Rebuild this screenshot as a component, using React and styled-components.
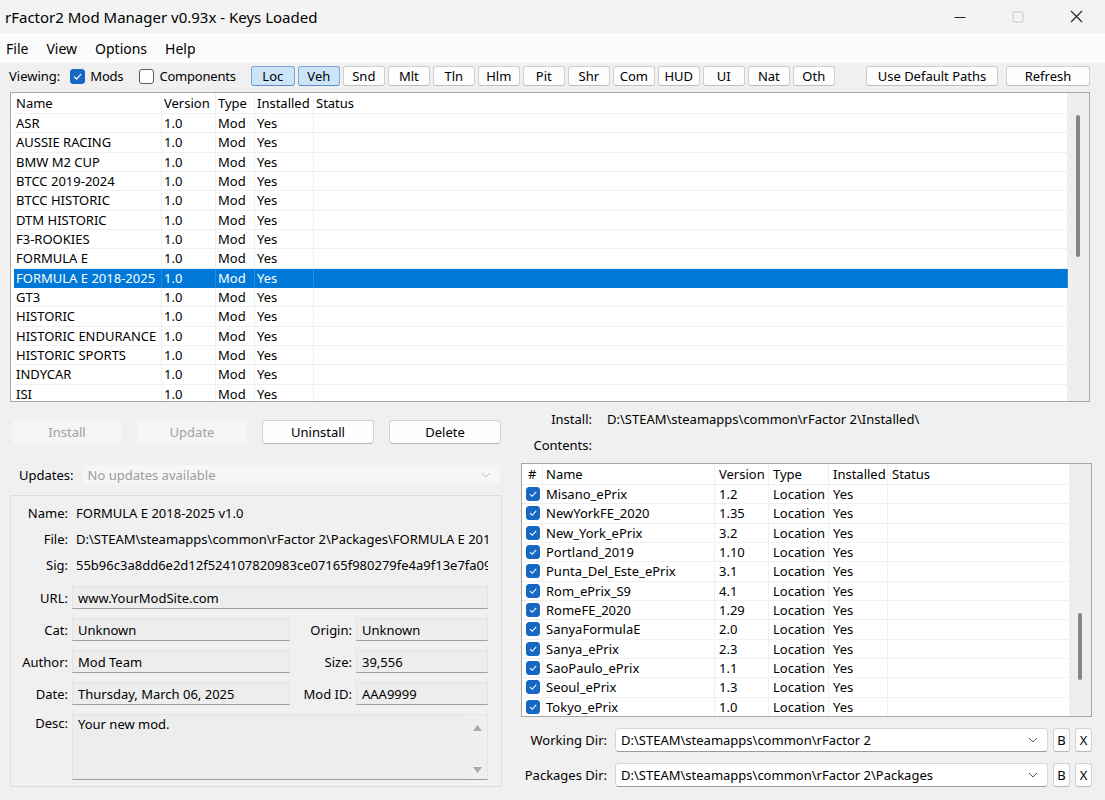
import React from "react";
import styled, { createGlobalStyle } from "styled-components";

const GlobalStyle = createGlobalStyle`
  html, body {
    margin: 0;
    padding: 0;
    background: #f0f0f0;
  }
  body {
    font-family: "Noto Sans", "Open Sans", sans-serif;
    font-size: 13px;
    color: #000;
  }
  * {
    box-sizing: border-box;
  }
`;

// data

const mods = [
  "ASR",
  "AUSSIE RACING",
  "BMW M2 CUP",
  "BTCC 2019-2024",
  "BTCC HISTORIC",
  "DTM HISTORIC",
  "F3-ROOKIES",
  "FORMULA E",
  "FORMULA E 2018-2025",
  "GT3",
  "HISTORIC",
  "HISTORIC ENDURANCE",
  "HISTORIC SPORTS",
  "INDYCAR",
  "ISI",
];

const contents = [
  ["Misano_ePrix", "1.2"],
  ["NewYorkFE_2020", "1.35"],
  ["New_York_ePrix", "3.2"],
  ["Portland_2019", "1.10"],
  ["Punta_Del_Este_ePrix", "3.1"],
  ["Rom_ePrix_S9", "4.1"],
  ["RomeFE_2020", "1.29"],
  ["SanyaFormulaE", "2.0"],
  ["Sanya_ePrix", "2.3"],
  ["SaoPaulo_ePrix", "1.1"],
  ["Seoul_ePrix", "1.3"],
  ["Tokyo_ePrix", "1.0"],
];

const filters = ["Loc", "Veh", "Snd", "Mlt", "Tln", "Hlm", "Pit", "Shr", "Com", "HUD", "UI", "Nat", "Oth"];

//Styled-Components

const Window = styled.div`
  width: 1105px;
  height: 800px;
  background: #f0f0f0;
  display: flex;
  flex-direction: column;
  overflow: hidden;
`;

const TitleBar = styled.div`
  height: 33px;
  flex-shrink: 0;
  background: #f3f3f3;
  display: flex;
  align-items: center;
  padding-left: 5px;
`;

const Title = styled.div`
  flex: 1;
  font-size: 15px;
`;

const WinButtons = styled.div`
  display: flex;
  height: 100%;
`;

const WinButton = styled.div`
  width: 58px;
  display: flex;
  align-items: center;
  justify-content: center;
`;

const MenuBar = styled.div`
  height: 30px;
  flex-shrink: 0;
  background: #fbfbfb;
  display: flex;
  align-items: center;
  gap: 18px;
  padding-left: 6px;
  font-size: 14px;
`;

const Toolbar = styled.div`
  height: 26px;
  flex-shrink: 0;
  display: flex;
  align-items: center;
  padding: 0 15px 0 9px;
`;

const CheckLabel = styled.label`
  display: flex;
  align-items: center;
  gap: 5px;
  letter-spacing: -0.2px;
  margin-left: ${(p) => p.$ml || 0}px;
`;

const Box = styled.span`
  width: ${(p) => p.$size}px;
  height: ${(p) => p.$size}px;
  border-radius: 3px;
  display: inline-flex;
  align-items: center;
  justify-content: center;
  flex-shrink: 0;
  background: ${(p) => (p.$on ? "#1668c4" : "#fff")};
  border: 1px solid ${(p) => (p.$on ? "#1668c4" : "#5c5c5c")};
`;

const FilterGroup = styled.div`
  display: flex;
  gap: 3px;
  margin-left: 15px;
`;

const ToolButton = styled.button`
  font: inherit;
  font-size: 13px;
  height: 20px;
  width: ${(p) => p.$w || 42}px;
  padding: 0;
  border-radius: 3px;
  color: #000;
  background: ${(p) => (p.$active ? "#cce4f7" : "#fdfdfd")};
  border: 1px solid ${(p) => (p.$active ? "#7fa9d3" : "#d0d0d0")};
  border-bottom-color: ${(p) => (p.$active ? "#5f8fc0" : "#bdbdbd")};
`;

const RightTools = styled.div`
  margin-left: auto;
  display: flex;
  gap: 8px;
`;

const TableFrame = styled.div`
  height: ${(p) => p.$h}px;
  margin: ${(p) => p.$m};
  flex-shrink: 0;
  border: 1px solid #a6a6a6;
  background: #fff;
  display: flex;
  overflow: hidden;
`;

const TableBody = styled.div`
  flex: 1;
  overflow: hidden;
  padding-left: ${(p) => p.$pl || 0}px;
`;

const Row = styled.div`
  display: grid;
  grid-template-columns: ${(p) => p.$cols};
  height: ${(p) => p.$h}px;
  background: ${(p) => (p.$sel ? "#0078d7" : "transparent")};
  color: ${(p) => (p.$sel ? "#fff" : "#000")};
`;

const Cell = styled.div`
  display: flex;
  align-items: center;
  gap: 6px;
  padding-left: ${(p) => p.$pl ?? 2}px;
  white-space: nowrap;
  overflow: hidden;
  border-right: 1px solid ${(p) => (p.$sel ? "#2a8ce0" : "#f0f0f0")};
  border-bottom: 1px solid ${(p) => (p.$sel ? "#0078d7" : "#f0f0f0")};
`;

const ScrollTrack = styled.div`
  width: 21px;
  flex-shrink: 0;
  background: #eeeeee;
  display: flex;
  flex-direction: column;
`;

const ScrollThumb = styled.div`
  width: 4px;
  margin-left: 8px;
  margin-top: ${(p) => p.$top}px;
  height: ${(p) => p.$h}px;
  border-radius: 2px;
  background: #858585;
`;

const Bottom = styled.div`
  flex: 1;
  display: grid;
  grid-template-columns: 512px 1fr;
`;

const LeftCol = styled.div`
  display: flex;
  flex-direction: column;
  padding-left: 10px;
`;

const RightCol = styled.div`
  display: flex;
  flex-direction: column;
  padding: 0 13px 0 9px;
`;

const ActionRow = styled.div`
  display: flex;
  gap: 15px;
  margin-top: 18px;
  padding-left: 2px;
`;

const ActionButton = styled.button`
  font: inherit;
  font-size: 13px;
  width: ${(p) => p.$w}px;
  height: 24px;
  border-radius: 4px;
  color: ${(p) => (p.disabled ? "#a2a2a2" : "#000")};
  background: ${(p) => (p.disabled ? "#f5f5f5" : "#fdfdfd")};
  border: 1px solid ${(p) => (p.disabled ? "#f5f5f5" : "#d3d3d3")};
  border-bottom-color: ${(p) => (p.disabled ? "#f5f5f5" : "#b8b8b8")};
`;

const UpdatesRow = styled.div`
  display: flex;
  align-items: center;
  margin-top: 20px;
  height: 21px;
  padding-left: 9px;
  gap: 8px;
`;

const Combo = styled.div`
  height: ${(p) => p.$h}px;
  width: ${(p) => (p.$w ? `${p.$w}px` : "auto")};
  flex: ${(p) => (p.$w ? "none" : 1)};
  margin-left: ${(p) => p.$ml || 0}px;
  display: flex;
  align-items: center;
  padding: 0 9px 0 5px;
  border-radius: 4px;
  color: ${(p) => (p.$disabled ? "#9c9c9c" : "#000")};
  background: ${(p) => (p.$disabled ? "#f6f6f6" : "#fff")};
  border: 1px solid ${(p) => (p.$disabled ? "#f0f0f0" : "#d6d6d6")};
  border-bottom-color: ${(p) => (p.$disabled ? "#f0f0f0" : "#9a9a9a")};
`;

const ComboText = styled.span`
  flex: 1;
  white-space: nowrap;
  overflow: hidden;
`;

const GroupBox = styled.div`
  margin-top: 10px;
  width: 492px;
  height: 292px;
  border: 1px solid #dcdcdc;
  padding: 4px 13px 0 0;
  display: flex;
  flex-direction: column;
`;

const InfoRow = styled.div`
  display: flex;
  align-items: center;
  height: 26px;
`;

const Label = styled.div`
  width: ${(p) => p.$w}px;
  flex-shrink: 0;
  text-align: right;
  white-space: nowrap;
  align-self: ${(p) => (p.$top ? "flex-start" : "center")};
`;

const InfoValue = styled.div`
  margin-left: ${(p) => p.$ml || 8}px;
  white-space: nowrap;
  overflow: hidden;
  flex: 1;
`;

const Fields = styled.div`
  display: flex;
  flex-direction: column;
  gap: 9px;
  margin-top: 8px;
`;

const FieldRow = styled.div`
  display: flex;
  align-items: center;
`;

const Field = styled.div`
  height: ${(p) => p.$h || 23}px;
  width: ${(p) => (p.$w ? `${p.$w}px` : "auto")};
  flex: ${(p) => (p.$w ? "none" : 1)};
  margin-left: 4px;
  padding-left: 5px;
  display: flex;
  align-items: ${(p) => (p.$multi ? "flex-start" : "center")};
  background: #ededed;
  border: 1px solid #e4e4e4;
  border-bottom-color: #9d9d9d;
  white-space: nowrap;
  overflow: hidden;
`;

const DescText = styled.div`
  flex: 1;
`;

const DescScroll = styled.div`
  width: 20px;
  height: 100%;
  display: flex;
  flex-direction: column;
  justify-content: space-between;
  align-items: center;
  padding: 10px 0 6px;
  background: #efefef;
`;

const InfoLine = styled.div`
  display: flex;
  align-items: center;
  height: 20px;
  margin-top: ${(p) => p.$mt}px;
`;

const DirRow = styled.div`
  display: flex;
  align-items: center;
  margin-top: 11px;
  height: 24px;
`;

const SmallButton = styled.button`
  font: inherit;
  font-size: 13px;
  width: 17px;
  height: 24px;
  padding: 0;
  margin-left: 5px;
  border-radius: 3px;
  background: #fdfdfd;
  border: 1px solid #d3d3d3;
  border-bottom-color: #b8b8b8;
  color: #000;
`;

// small drawings

const Check = ({ size }) => (
  <svg width={size - 4} height={size - 4} viewBox="0 0 10 10">
    <path d="M2 5.2 L4.2 7.3 L8.2 2.8" fill="none" stroke="#fff" strokeWidth="1.1" />
  </svg>
);

const CheckBox = ({ on, size = 15 }) => (
  <Box $on={on} $size={size}>
    {on && <Check size={size} />}
  </Box>
);

const Chevron = ({ color = "#555" }) => (
  <svg width="10" height="6" viewBox="0 0 10 6">
    <path d="M1 1 L5 5 L9 1" fill="none" stroke={color} strokeWidth="1" />
  </svg>
);

const Triangle = ({ up }) => (
  <svg width="9" height="6" viewBox="0 0 9 6">
    <path d={up ? "M0 6 L4.5 0 L9 6 Z" : "M0 0 L4.5 6 L9 0 Z"} fill="#a8a8a8" />
  </svg>
);

const modCols = "148px 54px 39px 59px 1fr";
const contentCols = "21px 172px 54px 60px 59px 1fr";

export default function App() {
  return (
    <Window>
      <GlobalStyle />
      <TitleBar>
        <Title>rFactor2 Mod Manager v0.93x - Keys Loaded</Title>
        <WinButtons>
          <WinButton>
            <svg width="12" height="12" viewBox="0 0 12 12">
              <path d="M0.5 6.5 H11.5" stroke="#222" strokeWidth="1" />
            </svg>
          </WinButton>
          <WinButton>
            <svg width="12" height="12" viewBox="0 0 12 12">
              <rect x="1" y="1" width="10" height="10" rx="1.5" fill="none" stroke="#c4c4c4" strokeWidth="1" />
            </svg>
          </WinButton>
          <WinButton>
            <svg width="13" height="13" viewBox="0 0 13 13">
              <path d="M1 1 L12 12 M12 1 L1 12" stroke="#222" strokeWidth="1.1" />
            </svg>
          </WinButton>
        </WinButtons>
      </TitleBar>

      <MenuBar>
        <span>File</span>
        <span>View</span>
        <span>Options</span>
        <span>Help</span>
      </MenuBar>

      <Toolbar>
        <span>Viewing:</span>
        <CheckLabel $ml={10}>
          <CheckBox on />
          Mods
        </CheckLabel>
        <CheckLabel $ml={16}>
          <CheckBox />
          Components
        </CheckLabel>
        <FilterGroup>
          {filters.map((f, i) => (
            <ToolButton key={f} $active={i < 2} $w={i === 0 ? 44 : 42}>
              {f}
            </ToolButton>
          ))}
        </FilterGroup>
        <RightTools>
          <ToolButton $w={132}>Use Default Paths</ToolButton>
          <ToolButton $w={84}>Refresh</ToolButton>
        </RightTools>
      </Toolbar>

      <TableFrame $h={310} $m="3px 15px 0 10px">
        <TableBody $pl={3}>
          <Row $cols={modCols} $h={21}>
            <Cell>Name</Cell>
            <Cell>Version</Cell>
            <Cell>Type</Cell>
            <Cell>Installed</Cell>
            <Cell>Status</Cell>
          </Row>
          {mods.map((name) => {
            const sel = name === "FORMULA E 2018-2025";
            return (
              <Row key={name} $cols={modCols} $h={19.33} $sel={sel}>
                <Cell $sel={sel}>{name}</Cell>
                <Cell $sel={sel}>1.0</Cell>
                <Cell $sel={sel}>Mod</Cell>
                <Cell $sel={sel}>Yes</Cell>
                <Cell $sel={sel} />
              </Row>
            );
          })}
        </TableBody>
        <ScrollTrack>
          <ScrollThumb $top={22} $h={142} />
        </ScrollTrack>
      </TableFrame>

      <Bottom>
        <LeftCol>
          <ActionRow>
            <ActionButton $w={110} disabled>
              Install
            </ActionButton>
            <ActionButton $w={110} disabled>
              Update
            </ActionButton>
            <ActionButton $w={112}>Uninstall</ActionButton>
            <ActionButton $w={112}>Delete</ActionButton>
          </ActionRow>

          <UpdatesRow>
            <span>Updates:</span>
            <Combo $h={21} $w={419} $disabled>
              <ComboText>No updates available</ComboText>
              <Chevron color="#c0c0c0" />
            </Combo>
          </UpdatesRow>

          <GroupBox>
            <InfoRow>
              <Label $w={57}>Name:</Label>
              <InfoValue>FORMULA E 2018-2025 v1.0</InfoValue>
            </InfoRow>
            <InfoRow>
              <Label $w={57}>File:</Label>
              <InfoValue>D:\STEAM\steamapps\common\rFactor 2\Packages\FORMULA E 2018</InfoValue>
            </InfoRow>
            <InfoRow>
              <Label $w={57}>Sig:</Label>
              <InfoValue>55b96c3a8dd6e2d12f524107820983ce07165f980279fe4a9f13e7fa09</InfoValue>
            </InfoRow>

            <Fields>
              <FieldRow>
                <Label $w={57}>URL:</Label>
                <Field>www.YourModSite.com</Field>
              </FieldRow>
              <FieldRow>
                <Label $w={57}>Cat:</Label>
                <Field $w={218}>Unknown</Field>
                <Label $w={62}>Origin:</Label>
                <Field>Unknown</Field>
              </FieldRow>
              <FieldRow>
                <Label $w={57}>Author:</Label>
                <Field $w={218}>Mod Team</Field>
                <Label $w={62}>Size:</Label>
                <Field>39,556</Field>
              </FieldRow>
              <FieldRow>
                <Label $w={57}>Date:</Label>
                <Field $w={218}>Thursday, March 06, 2025</Field>
                <Label $w={62}>Mod ID:</Label>
                <Field>AAA9999</Field>
              </FieldRow>
              <FieldRow>
                <Label $w={57} $top>
                  Desc:
                </Label>
                <Field $h={66} $multi>
                  <DescText>Your new mod.</DescText>
                  <DescScroll>
                    <Triangle up />
                    <Triangle />
                  </DescScroll>
                </Field>
              </FieldRow>
            </Fields>
          </GroupBox>
        </LeftCol>

        <RightCol>
          <InfoLine $mt={7}>
            <Label $w={71}>Install:</Label>
            <InfoValue $ml={15}>D:\STEAM\steamapps\common\rFactor 2\Installed\</InfoValue>
          </InfoLine>
          <InfoLine $mt={6}>
            <Label $w={71}>Contents:</Label>
          </InfoLine>

          <TableFrame $h={254} $m="8px 0 0 0">
            <TableBody>
              <Row $cols={contentCols} $h={21}>
                <Cell $pl={6}>#</Cell>
                <Cell $pl={3}>Name</Cell>
                <Cell $pl={4}>Version</Cell>
                <Cell $pl={4}>Type</Cell>
                <Cell $pl={4}>Installed</Cell>
                <Cell $pl={4}>Status</Cell>
              </Row>
              {contents.map(([name, ver]) => (
                <Row key={name} $cols={contentCols} $h={19.33}>
                  <Cell $pl={4}>
                    <CheckBox on size={14} />
                  </Cell>
                  <Cell $pl={3}>{name}</Cell>
                  <Cell $pl={4}>{ver}</Cell>
                  <Cell $pl={4}>Location</Cell>
                  <Cell $pl={4}>Yes</Cell>
                  <Cell />
                </Row>
              ))}
            </TableBody>
            <ScrollTrack>
              <ScrollThumb $top={149} $h={67} />
            </ScrollTrack>
          </TableFrame>

          <DirRow>
            <Label $w={86}>Working Dir:</Label>
            <Combo $h={24} $ml={8}>
              <ComboText>D:\STEAM\steamapps\common\rFactor 2</ComboText>
              <Chevron />
            </Combo>
            <SmallButton>B</SmallButton>
            <SmallButton>X</SmallButton>
          </DirRow>
          <DirRow>
            <Label $w={86}>Packages Dir:</Label>
            <Combo $h={24} $ml={8}>
              <ComboText>D:\STEAM\steamapps\common\rFactor 2\Packages</ComboText>
              <Chevron />
            </Combo>
            <SmallButton>B</SmallButton>
            <SmallButton>X</SmallButton>
          </DirRow>
        </RightCol>
      </Bottom>
    </Window>
  );
}
